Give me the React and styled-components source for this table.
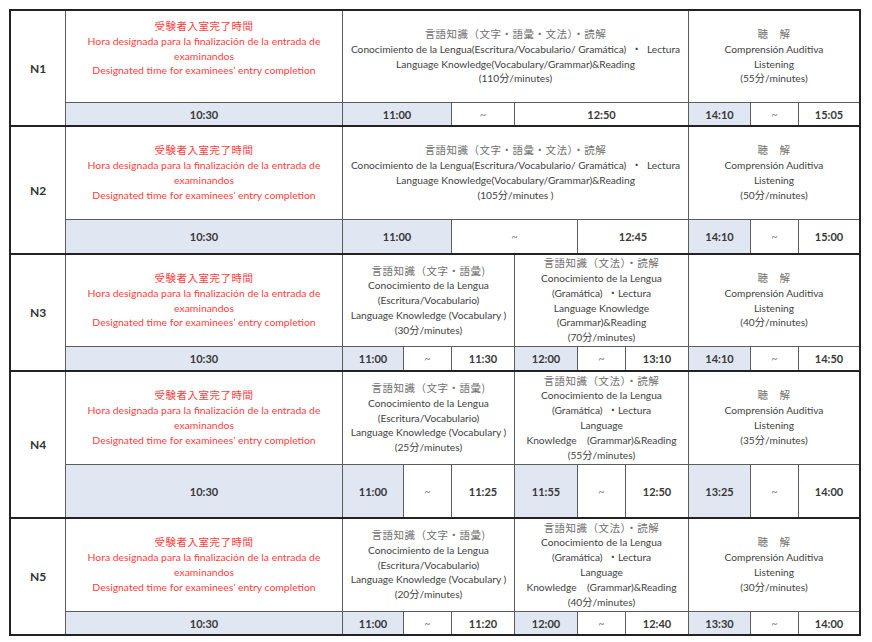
import React from "react";
import styled, { createGlobalStyle } from "styled-components";

const COLS = "54px 276px 60px 47px 62px 62px 47px 62px 61px 47px 60px";

const GlobalStyle = createGlobalStyle`
  body {
    margin: 0;
    background: #ffffff;
    font-family: Lato, "Noto Sans CJK JP", sans-serif;
  }
`;

const Sheet = styled.div`
  display: flex;
  flex-direction: column;
  gap: 2px;
  padding: 2px;
  width: max-content;
  margin: 9px 0 0 9px;
  background: #222222;
`;

const Block = styled.div`
  display: grid;
  grid-template-columns: ${COLS};
  grid-template-rows: ${(props) => props.$rows};
  gap: 1px;
  background: #5c5c5c;
`;

const LevelCell = styled.div`
  grid-column: 1;
  grid-row: 1 / 3;
  display: flex;
  align-items: center;
  justify-content: center;
  background: #ffffff;
  font-size: 12px;
  font-weight: 700;
  color: #333333;
`;

const TextCell = styled.div`
  grid-column: ${(props) => props.$col};
  grid-row: 1;
  display: flex;
  flex-direction: column;
  align-items: center;
  justify-content: center;
  padding-bottom: ${(props) => props.$lift || 0}px;
  background: #ffffff;
  text-align: center;
  font-size: ${(props) => (props.$red ? "10.4px" : "10.2px")};
  line-height: 14.8px;
  white-space: pre;
  color: ${(props) => (props.$red ? "#ff4040" : "#3f3f3f")};
`;

const Line = styled.span`
  display: block;
  height: 14.8px;
`;

const Jp = styled.span`
  font-family: "Noto Sans CJK JP", sans-serif;
  font-size: 10.5px;
  letter-spacing: 0.5px;
  color: ${(props) => (props.$red ? "#ff4040" : "#707070")};
`;

const TimeCell = styled.div`
  grid-column: ${(props) => props.$col};
  grid-row: 2;
  display: flex;
  align-items: center;
  justify-content: center;
  background: ${(props) => (props.$shade ? "#e0e6f2" : "#ffffff")};
  font-size: 11px;
  font-weight: ${(props) => (props.$tilde ? 400 : 700)};
  color: ${(props) => (props.$tilde ? "#8a8a8a" : "#383838")};
`;

const redLines = [
  { jp: true, text: "受験者入室完了時間" },
  { text: "Hora designada para la finalización de la entrada de" },
  { text: "examinandos" },
  { text: "Designated time for examinees’ entry completion" },
];

const vocabLines = (min) => [
  { jp: true, text: "言語知識（文字・語彙)" },
  { text: "Conocimiento de la Lengua" },
  { text: "(Escritura/Vocabulario)" },
  { text: "Language Knowledge (Vocabulary )" },
  { text: `(${min}分/minutes)` },
];

const grammarLines = (min, split) => [
  { jp: true, text: "言語知識（文法）・読解" },
  { text: "Conocimiento de la Lengua" },
  { text: "(Gramática)  ・Lectura" },
  ...(split
    ? [{ text: "Language" }, { text: "Knowledge    (Grammar)&Reading" }]
    : [{ text: "Language Knowledge" }, { text: "(Grammar)&Reading" }]),
  { text: `(${min}分/minutes)` },
];

const fullLines = (min, end) => [
  { jp: true, text: "言語知識（文字・語彙・文法）・読解" },
  { text: "Conocimiento de la Lengua(Escritura/Vocabulario/ Gramática)  ・  Lectura" },
  { text: "Language Knowledge(Vocabulary/Grammar)&Reading" },
  { text: `(${min}分/minutes${end})` },
];

const listenLines = (min) => [
  { jp: true, text: "聴　解" },
  { text: "Comprensión Auditiva" },
  { text: "Listening" },
  { text: `(${min}分/minutes)` },
];

const levels = [
  {
    id: "N1",
    rows: "91px 22px",
    lift: 16,
    sections: [
      { col: "3 / 9", lines: fullLines(110, "") },
      { col: "9 / 12", lines: listenLines(55) },
    ],
    times: [
      { col: "3 / 5", t: "11:00", shade: true },
      { col: "5", t: "~" },
      { col: "6 / 9", t: "12:50" },
      { col: "9", t: "14:10", shade: true },
      { col: "10", t: "~" },
      { col: "11", t: "15:05" },
    ],
  },
  {
    id: "N2",
    rows: "92px 33px",
    sections: [
      { col: "3 / 9", lines: fullLines(105, " ") },
      { col: "9 / 12", lines: listenLines(50) },
    ],
    times: [
      { col: "3 / 5", t: "11:00", shade: true },
      { col: "5 / 7", t: "~" },
      { col: "7 / 9", t: "12:45" },
      { col: "9", t: "14:10", shade: true },
      { col: "10", t: "~" },
      { col: "11", t: "15:00" },
    ],
  },
  {
    id: "N3",
    rows: "91px 23px",
    sections: [
      { col: "3 / 6", lines: vocabLines(30) },
      { col: "6 / 9", lines: grammarLines(70, false) },
      { col: "9 / 12", lines: listenLines(40) },
    ],
    times: ["11:00", "~", "11:30", "12:00", "~", "13:10", "14:10", "~", "14:50"],
  },
  {
    id: "N4",
    rows: "92px 52px",
    sections: [
      { col: "3 / 6", lines: vocabLines(25) },
      { col: "6 / 9", lines: grammarLines(55, true) },
      { col: "9 / 12", lines: listenLines(35) },
    ],
    times: ["11:00", "~", "11:25", "11:55", "~", "12:50", "13:25", "~", "14:00"],
  },
  {
    id: "N5",
    rows: "92px 22px",
    sections: [
      { col: "3 / 6", lines: vocabLines(20) },
      { col: "6 / 9", lines: grammarLines(40, true) },
      { col: "9 / 12", lines: listenLines(30) },
    ],
    times: ["11:00", "~", "11:20", "12:00", "~", "12:40", "13:30", "~", "14:00"],
  },
];

// short form: nine single-column times, every third one starts a shaded block
const expandTimes = (times) =>
  typeof times[0] === "string"
    ? times.map((t, i) => ({ col: String(i + 3), t, shade: i % 3 === 0 }))
    : times;

function Lines({ lines, red }) {
  return lines.map((l, i) => (
    <Line key={i}>{l.jp ? <Jp $red={red}>{l.text}</Jp> : l.text}</Line>
  ));
}

function LevelBlock({ level }) {
  return (
    <Block $rows={level.rows}>
      <LevelCell>{level.id}</LevelCell>
      <TextCell $col="2" $red $lift={level.lift}>
        <Lines lines={redLines} red />
      </TextCell>
      {level.sections.map((s) => (
        <TextCell key={s.col} $col={s.col}>
          <Lines lines={s.lines} />
        </TextCell>
      ))}
      <TimeCell $col="2" $shade>
        10:30
      </TimeCell>
      {expandTimes(level.times).map((c) => (
        <TimeCell
          key={c.col}
          $col={c.col}
          $shade={c.shade}
          $tilde={c.t === "~"}
        >
          {c.t}
        </TimeCell>
      ))}
    </Block>
  );
}

export default function App() {
  return (
    <>
      <GlobalStyle />
      <Sheet>
        {levels.map((level) => (
          <LevelBlock key={level.id} level={level} />
        ))}
      </Sheet>
    </>
  );
}
